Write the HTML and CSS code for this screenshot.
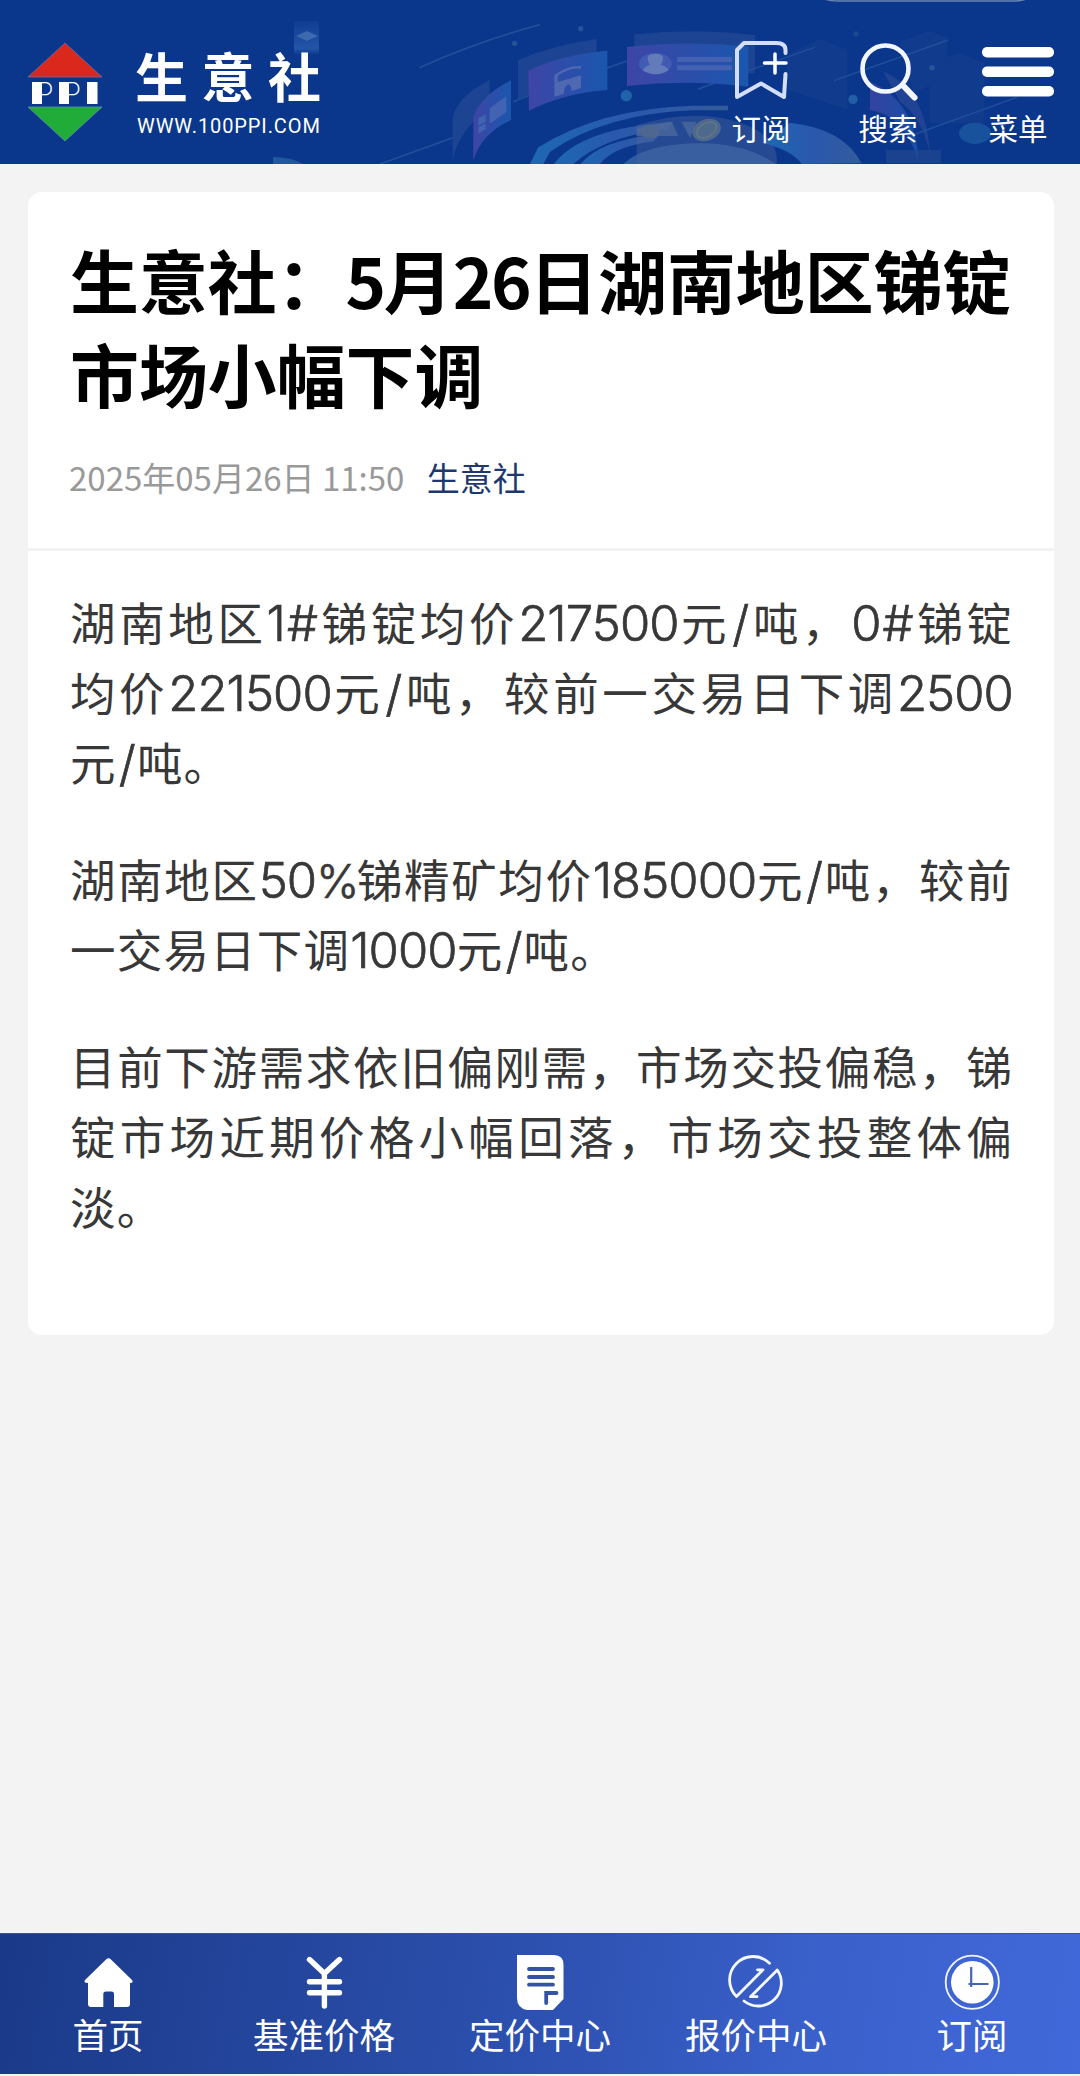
FILE: index.html
```html
<!DOCTYPE html>
<html lang="zh-CN">
<head>
  <meta charset="utf-8">
  <title>生意社：5月26日湖南地区锑锭市场小幅下调</title>
  <link rel="stylesheet" href="styles.css">
</head>
<body>
  <header class="header">
    <svg class="header-bg" viewBox="0 0 1080 164">
      <defs>
        <linearGradient id="panel" x1="0" x2="1">
          <stop offset="0" stop-color="#3e45a6"/>
          <stop offset="1" stop-color="#1a57ae"/>
        </linearGradient>
        <linearGradient id="ring" x1="0" x2="1">
          <stop offset="0" stop-color="#1d68b2"/>
          <stop offset=".5" stop-color="#2a58ad"/>
          <stop offset="1" stop-color="#335c9a"/>
        </linearGradient>
        <linearGradient id="fade" x1="0" y1="0" x2="0" y2="1">
          <stop offset="0" stop-color="#2a5cae" stop-opacity=".15"/>
          <stop offset=".8" stop-color="#2a5cae" stop-opacity=".8"/>
          <stop offset="1" stop-color="#2a5cae" stop-opacity="0"/>
        </linearGradient>
      </defs>
      <path d="M294 21h25v34h-25z" fill="url(#fade)"/>
      <path d="M296 36l11-5 11 5-11 5z" fill="#3d69af"/>
      <path d="M273 157q18 0 30 7h-30z" fill="#1f589f"/>
      <g transform="translate(360 0) scale(.33333)">
        <path d="M178 203Q350 125 540 74M60 492L310 402M460 305l45-18M740 205l60-22M1015 267l70-25" fill="none" stroke="#21509a" stroke-width="5"/>
        <path d="M278 480V355Q290 290 389 240V330Q300 380 278 480z" fill="#1c4492"/>
        <path d="M340 480V350Q365 285 453 241V360Q365 400 340 480z" fill="url(#panel)"/>
        <path d="M389 325l50-36v48l-50 34zM355 355l22-12v22l-22 12zM355 382l22-12v18l-22 12z" fill="#4263b1"/>
        <path d="M474 180Q580 135 710 117V235Q570 255 474 300z" fill="#1c4492"/>
        <path d="M505 212Q600 165 742 152V270Q610 280 507 332z" fill="url(#panel)"/>
        <path d="M583 225q40-30 80-27v8q-35-5-70 22v18l70-20v38l-28 10q-2-24-12-20-10 4-12 28l-28 8z" fill="#4e68b1"/>
        <path d="M823 103Q1010 83 1185 105V220H823z" fill="#1c4492"/>
        <path d="M801 141Q980 120 1165 140V260Q980 238 801 258z" fill="url(#panel)"/>
        <ellipse cx="886" cy="191" rx="49" ry="32" fill="#415bb3"/>
        <path d="M848 211q8-14 22-16-20-34 16-34t16 34q18 4 24 16-38 24-78 0z" fill="#637cb9"/>
        <path d="M951 171h165v15H951zM951 196h165v15H951z" fill="#4462b1"/>
        <circle cx="799" cy="287" r="17" fill="#2262aa"/>
        <circle cx="464" cy="130" r="8" fill="#255397"/>
        <circle cx="662" cy="86" r="8" fill="#255397"/>
        <path d="M510 492l25-50Q720 325 1000 317H1104V331H1000Q740 340 570 455l-20 37z" fill="url(#ring)"/>
        <path d="M582 492Q660 385 940 365l-20 22Q730 410 640 492z" fill="url(#ring)"/>
        <path d="M662 492Q720 420 900 402l-20 22Q760 440 720 492z" fill="url(#ring)"/>
        <path d="M790 492Q850 435 1000 430T1248 492z" fill="#2e5ba2"/>
        <path d="M830 375Q1000 325 1130 365T1250 492H830z" fill="#4d669e" opacity=".4"/>
        <path d="M830 385l105-20 20 43H830zM965 365h45l-20 50z" fill="#506b9e" opacity=".7"/>
        <ellipse cx="870" cy="394" rx="30" ry="20" fill="#4d6791"/>
        <ellipse cx="1040" cy="390" rx="44" ry="32" fill="#4f698d" transform="rotate(-20 1040 390)"/>
        <ellipse cx="1040" cy="390" rx="32" ry="20" fill="none" stroke="#647987" stroke-width="4" transform="rotate(-30 1040 390)"/>
      </g>
      <g transform="translate(700 0) scale(.33333)">
        <path d="M270 368Q430 385 485 490L305 492Q275 450 190 430z" fill="url(#ring)"/>
        <path d="M260 165l100-48 82 32v180l-180-60zM602 125l85-33 55 20v120L640 280zM688 190l90-30 75 30v180H688z" fill="#174190" opacity=".5"/>
        <path d="M510 245q140 60 145 240-40-140-145-155z" fill="url(#panel)" opacity=".8"/>
        <path d="M550 215q130 55 140 250-20-110-90-160z" fill="#294995" opacity=".7"/>
        <path d="M145 212L345 142M402 242L745 120M630 408L950 292" stroke="#21509a" stroke-width="4"/>
        <circle cx="459" cy="298" r="14" fill="#225ea3"/>
        <circle cx="696" cy="203" r="8" fill="#255597"/>
        <circle cx="468" cy="102" r="8" fill="#1c4892"/>
        <ellipse cx="825" cy="400" rx="48" ry="32" fill="#18529c"/>
        <path d="M558 450h165v40H558z" fill="#24498f" opacity=".6"/>
      </g>
      <path d="M822-2q6 3 16 3h176q8 0 15-3" fill="none" stroke="#6984b5" stroke-width="1.5"/>
    </svg>

    <div class="logo">
      <svg class="logo-mark" viewBox="0 0 76 100">
        <path d="M38 1L75 35H1z" fill="#da291c" stroke="#6b6caa" stroke-width=".8"/>
        <path d="M1 65h74L38 99z" fill="#21ab39" stroke="#5f8fae" stroke-width=".8"/>
        <text class="logo-ppi" x="8.5 36 64" y="61.5">PPI</text>
        <path d="M5 40h10v22H5zM32 40h10v22H32zM60 40h10.500v22H60z" fill="#fff"/>
      </svg>
      <div class="logo-text">
        <div class="logo-name">生意社</div>
        <div class="logo-url">WWW.100PPI.COM</div>
      </div>
    </div>

    <div class="tools">
      <a class="tool tool-sub">
        <svg width="72" height="72" viewBox="0 0 72 72" fill="none" stroke="#d3dffa" stroke-width="4" stroke-linecap="round" stroke-linejoin="round">
          <path d="M60.500 22V19Q60.500 12 51 12H19L12 19V66L36 52.500 59 66 60.500 43"/>
          <path d="M50 23v19M39.500 32H61" stroke="#fff" stroke-width="3.500"/>
        </svg>
        <span>订阅</span>
      </a>
      <a class="tool tool-search">
        <svg width="72" height="72" viewBox="0 0 72 72" fill="none" stroke="#f2f6ff" stroke-linecap="round">
          <circle cx="33.500" cy="37.500" r="23" stroke-width="4.600"/>
          <path d="M51 54.500L62.500 66.500" stroke-width="6"/>
        </svg>
        <span>搜索</span>
      </a>
      <a class="tool tool-menu">
        <svg width="72" height="72" viewBox="0 0 72 72" fill="#fff">
          <rect y="16" width="72" height="10.500" rx="5"/>
          <rect y="35.500" width="72" height="10.500" rx="5"/>
          <rect y="55" width="72" height="10.500" rx="5"/>
        </svg>
        <span>菜单</span>
      </a>
    </div>
  </header>

  <main class="article">
    <div class="article-head">
      <h1>生意社：<span>5</span>月<span>26</span>日湖南地区锑锭市场小幅下调</h1>
      <div class="meta">2025年05月26日 11:50 <a>生意社</a></div>
    </div>
    <div class="article-body">
      <p>湖南地区<b>1</b><b class="sign">#</b>锑锭均价<b>217500</b>元<b class="sign">/</b>吨，<b>0</b><b class="sign">#</b>锑锭均价<b>221500</b>元<b class="sign">/</b>吨，较前一交易日下调<b>2500</b>元<b class="sign">/</b>吨。</p>
      <p>湖南地区<b>50</b><b class="percent">%</b>锑精矿均价<b>185000</b>元<b class="sign">/</b>吨，较前一交易日下调<b>1000</b>元<b class="sign">/</b>吨。</p>
      <p>目前下游需求依旧偏刚需，市场交投偏稳，锑锭市场近期价格小幅回落，市场交投整体偏淡。</p>
    </div>
  </main>

  <nav class="footer-nav">
    <a>
      <svg viewBox="0 0 56 56" fill="#fff">
        <path d="M26 5.500Q28.500 3 31 5.500L52 26Q54 29 50 29V50Q50 53 47 53H34V40Q34 37.500 31.500 37.500H26Q23.300 37.500 23.300 40V53H11Q8 53 8 50V29Q3 29 5 26z"/>
      </svg>
      <span>首页</span>
    </a>
    <a>
      <svg viewBox="0 0 56 56" fill="none" stroke="#fff" stroke-width="5.400" stroke-linecap="round" stroke-linejoin="round">
        <path d="M13.500 5.500L28.400 19.500 43.500 5.500M28.400 19.500V52M13.500 27.800H43.500M13.500 38.800H43.500"/>
      </svg>
      <span>基准价格</span>
    </a>
    <a>
      <svg viewBox="0 0 56 56">
        <path d="M5 1H42Q51.500 1 51.500 11V45L41 56H15Q5 54 5 44z" fill="#fff"/>
        <path d="M17 15H41M17 23H41M17 30.700H41M44.500 39H34.200V49" fill="none" stroke="#3553a4" stroke-width="3.800" stroke-linecap="round"/>
      </svg>
      <span>定价中心</span>
    </a>
    <a>
      <svg viewBox="0 0 56 56" fill="none" stroke="#f4f8ff" stroke-width="2.800" stroke-linecap="round" stroke-linejoin="round">
        <path d="M41.500 9.300A23 23 0 0 0 8.500 42.500L35 15.800H29.500"/>
        <path d="M16 47A23 23 0 0 0 49.300 16L22.500 42.700H29"/>
      </svg>
      <span>报价中心</span>
    </a>
    <a>
      <svg viewBox="0 0 56 56" fill="none">
        <circle cx="28.300" cy="28.300" r="26.600" stroke="#eef3ff" stroke-width="1.800"/>
        <circle cx="28.300" cy="28.300" r="21.300" fill="#fff"/>
        <path d="M27.200 13V33M24.500 30H44.500" stroke="#4664b4" stroke-width="2.200"/>
      </svg>
      <span>订阅</span>
    </a>
  </nav>
</body>
</html>
```
FILE: styles.css
```css
* { box-sizing: border-box; }
body {
  margin: 0;
  height: 2076px;
  display: flex;
  flex-direction: column;
  background: #f3f3f3;
  font-family: "Noto Sans CJK SC", sans-serif;
}

/* header */
.header {
  position: relative;
  height: 164px;
  flex: none;
  display: flex;
  justify-content: space-between;
  padding: 0 26px 0 27px;
  background: #0a378c;
  color: #fff;
  overflow: hidden;
}
.header-bg {
  position: absolute;
  left: 0;
  top: 0;
  width: 1080px;
  height: 164px;
}
.logo, .tools {
  position: relative;
  display: flex;
}
.logo-mark {
  width: 76px;
  height: 100px;
  margin-top: 42px;
}
.logo-ppi {
  font: 200 29.5px Inter, sans-serif;
  fill: #fff;
}
.logo-text {
  margin-left: 32px;
  padding-top: 44px;
}
.logo-name {
  font-size: 53px;
  line-height: 62px;
  font-weight: bold;
  letter-spacing: 13.5px;
}
.logo-url {
  margin: 8px 0 0 2px;
  font: 20px/24px Roboto, sans-serif;
  letter-spacing: 0.9px;
}
.tools { padding-top: 31px; }
.tool {
  display: flex;
  flex-direction: column;
  align-items: center;
  font-size: 29.5px;
  line-height: 40px;
}
.tool span { margin-top: 4px; }
.tool-sub { margin-right: 55px; }
.tool-search { margin-right: 58px; }

/* article */
.article {
  flex: none;
  width: 1026px;
  height: 1143px;
  margin: 28px 0 0 28px;
  background: #fff;
  border-radius: 14px;
}
.article-head {
  height: 359px;
  padding: 40px 39px 0 42px;
  border-bottom: 3px solid #f2f2f2;
}
h1 {
  margin: 0;
  font-size: 68.9px;
  line-height: 94px;
  font-weight: bold;
  color: #000;
}
h1 span { letter-spacing: -2.4px; }
.meta {
  margin: 33px 0 0 -1px;
  font-size: 33px;
  line-height: 48px;
  color: #999;
}
.meta a {
  margin-left: 15px;
  color: #1d3871;
}
.article-body {
  padding: 35px 41px 0 42px;
  font-size: 45.5px;
  line-height: 70px;
  color: #383838;
}
.article-body p {
  margin: 0 0 47px;
  text-align: justify;
  letter-spacing: 1.2px;
}
.article-body b {
  font-family: Inter, sans-serif;
  font-size: 49px;
  line-height: 1;
  font-weight: 300;
  letter-spacing: -0.9px;
  -webkit-text-stroke: 0.7px #383838;
}
.article-body .sign { padding: 0 2px; }
.article-body .percent {
  font-size: 46px;
  letter-spacing: -3px;
}

/* bottom nav */
.footer-nav {
  flex: none;
  height: 141px;
  margin: auto 0 2px;
  padding-top: 20px;
  display: flex;
  border-top: 1px solid #40548a;
  background: linear-gradient(100deg, #1a3988, #2d51b0 50%, #3a60cb 75%, #4169d9);
  color: #fff;
}
.footer-nav a {
  flex: 1;
  display: flex;
  flex-direction: column;
  align-items: center;
  font-size: 35.5px;
  line-height: 47px;
}
.footer-nav svg {
  width: 56px;
  height: 56px;
}
```
